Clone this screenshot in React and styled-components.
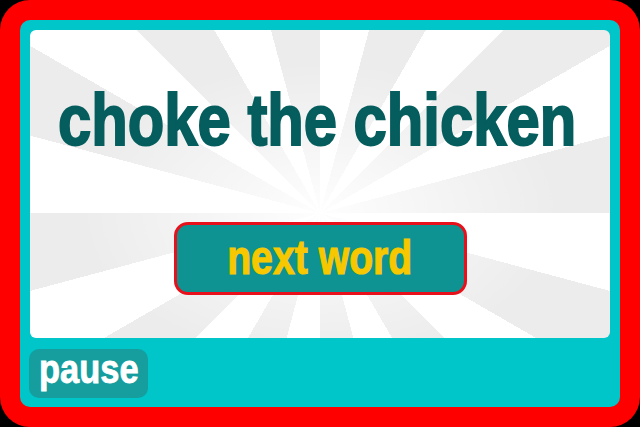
import React from 'react'
import styled, { createGlobalStyle } from 'styled-components'

const GlobalStyle = createGlobalStyle`
	html, body {
		margin: 0;
		padding: 0;
		background: #000;
	}
	body {
		width: 640px;
		height: 427px;
		overflow: hidden;
	}
`

// no narrow face installed, so Liberation Sans bold gets squeezed
const fontStack = `"Liberation Sans", Arial, sans-serif`

const Frame = styled.div`
	width: 640px;
	height: 427px;
	box-sizing: border-box;
	padding: 20px;
	background: #ff0000;
	border-radius: 30px;
	display: flex;
`

const Board = styled.div`
	flex: 1;
	min-width: 0;
	display: flex;
	flex-direction: column;
	padding: 10px 10px 9px 10px;
	background: #00c5c9;
	border-radius: 10px;
`

const Panel = styled.div`
	height: 308px;
	min-width: 0;
	overflow: hidden;
	display: flex;
	flex-direction: column;
	align-items: center;
	padding-top: 54px;
	box-sizing: border-box;
	border-radius: 6px;
	background:
		radial-gradient(ellipse 240px 150px at 50% 59%, rgba(255, 255, 255, 0.95) 0%, rgba(255, 255, 255, 0.5) 45%, rgba(255, 255, 255, 0) 100%),
		repeating-conic-gradient(from 0deg at 50% 59.5%, #ffffff 0deg 15deg, #ececec 15deg 30deg);
`

const Squeeze = styled.span`
	display: inline-block;
	flex: none;
	white-space: nowrap;
	transform: scaleX(${(p) => p.$x || 0.83});
	transform-origin: center;
`

const Word = styled.h1`
	width: 100%;
	display: flex;
	justify-content: center;
	margin: 0;
	padding-right: 6px;
	box-sizing: border-box;
	font-family: ${fontStack};
	font-weight: 700;
	font-size: 72px;
	line-height: 72px;
	color: #055d5d;
	-webkit-text-stroke: 2px #055d5d;
`

const NextButton = styled.button`
	margin-top: 66px;
	width: 293px;
	height: 73px;
	box-sizing: border-box;
	display: flex;
	justify-content: center;
	align-items: center;
	border: 3px solid #e8111b;
	border-radius: 14px;
	background: #0e9292;
	color: #f7c800;
	font-family: ${fontStack};
	font-weight: 700;
	font-size: 49px;
	line-height: 60px;
	padding: 0 0 4px 0;
	-webkit-text-stroke: 1.2px #f7c800;
	cursor: pointer;
`

const Footer = styled.div`
	display: flex;
	padding-top: 11px;
`

const PauseButton = styled.button`
	margin-left: -1px;
	width: 119px;
	height: 49px;
	box-sizing: border-box;
	border: none;
	border-radius: 10px;
	background: #169d9e;
	color: #ffffff;
	font-family: ${fontStack};
	font-weight: 700;
	font-size: 40px;
	line-height: 41px;
	padding: 0 0 8px 0;
	-webkit-text-stroke: 0.8px #ffffff;
	cursor: pointer;
`

export default function App() {
	return (
		<>
			<GlobalStyle />
			<Frame>
				<Board>
					<Panel>
						<Word>
							<Squeeze $x={0.83}>choke the chicken</Squeeze>
						</Word>
						<NextButton>
							<Squeeze $x={0.8}>next word</Squeeze>
						</NextButton>
					</Panel>
					<Footer>
						<PauseButton>
							<Squeeze $x={0.86}>pause</Squeeze>
						</PauseButton>
					</Footer>
				</Board>
			</Frame>
		</>
	)
}
